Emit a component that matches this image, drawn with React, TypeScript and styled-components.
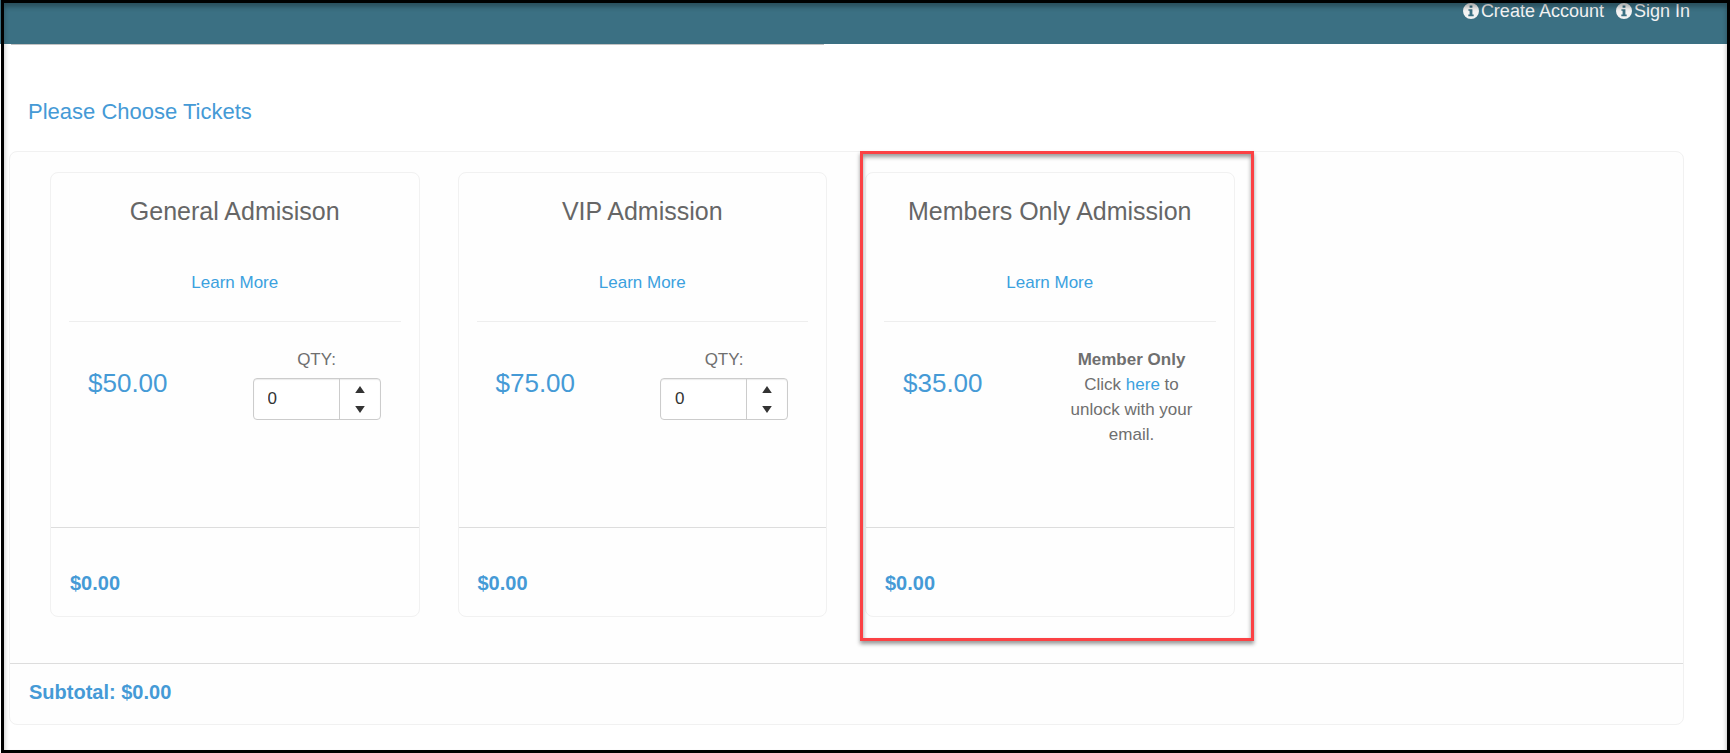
import React, { useId, useState } from "react";
import styled, { createGlobalStyle } from "styled-components";

const GlobalStyle = createGlobalStyle`
  *, *::before, *::after { box-sizing: border-box; }
  body {
    margin: 0;
    background: #fff;
    color: #6f6f6f;
    font-family: "Liberation Sans", Arial, Helvetica, sans-serif;
    font-size: 17px;
    line-height: 25px;
  }
  a { color: #3ba1de; text-decoration: none; }
  h1, h2, p { margin: 0; font-weight: 400; }
`;

const Page = styled.div`
  min-height: 100vh;
`;

const WindowFrame = styled.div`
  position: fixed;
  inset: 0 0 0 1px;
  border: 3px solid #000;
  box-shadow: inset 0 4px 5px rgba(0, 0, 0, 0.3);
  pointer-events: none;
  z-index: 2;
`;

const Header = styled.header`
  height: 44px;
  padding: 0 40px;
  background: #3b7083;
`;

const AccountNav = styled.nav`
  display: flex;
  justify-content: flex-end;
  gap: 12px;
`;

const AccountLink = styled.a`
  display: flex;
  align-items: center;
  gap: 2px;
  color: #f4f4f4;
  font-size: 18px;
  line-height: 22px;
`;

const HeaderRule = styled.div`
  width: 47%;
  height: 1px;
  margin-left: 11px;
  background: #c2c2c2;
`;

const Main = styled.main`
  padding: 54px 46px 0 9px;
`;

const Heading = styled.h1`
  padding: 0 19px;
  color: #459ad6;
  font-size: 22px;
  line-height: 26px;
`;

const Panel = styled.section`
  margin-top: 26px;
  border: 1px solid #f1f1f1;
  border-radius: 8px;
  background: #fefefe;
`;

const TicketGrid = styled.div`
  display: grid;
  grid-template-columns: repeat(4, 1fr);
  gap: 38px;
  padding: 20px 41px 46px 40px;
`;

const Card = styled.article`
  position: relative;
  display: flex;
  flex-direction: column;
  border: 1px solid #f1f1f1;
  border-radius: 8px;
`;

const Highlight = styled.div`
  position: absolute;
  inset: -22px -20px -25px -6px;
  border: 3px solid #fb4144;
  box-shadow: 0 3px 4px rgba(0, 0, 0, 0.4), inset 0 3px 4px rgba(0, 0, 0, 0.4);
  pointer-events: none;
`;

const CardBody = styled.div`
  min-height: 354px;
  padding: 23px 18px;
  text-align: center;
`;

const Title = styled.h2`
  color: #666;
  font-size: 25px;
  line-height: 30px;
`;

const LearnMore = styled.p`
  padding: 44px 0 26px;
  border-bottom: 1px solid #eee;
`;

const PriceRow = styled.div`
  display: flex;
  justify-content: space-between;
  padding: 25px 20px 0 19px;
`;

const Price = styled.p`
  padding-top: 18px;
  color: #459ad6;
  font-size: 26px;
  line-height: 36px;
`;

const Action = styled.div`
  display: flex;
  flex-direction: column;
  width: 128px;
`;

const Spinner = styled.div`
  display: flex;
  height: 42px;
  margin-top: 6px;
  border: 1px solid #ccc;
  border-radius: 4px;
  background: #fff;
  box-shadow: inset 0 1px 1px rgba(0, 0, 0, 0.08);
`;

const Quantity = styled.input`
  flex: 1;
  min-width: 0;
  padding: 0 14px 2px;
  border: 0;
  border-right: 1px solid #ccc;
  border-radius: 4px 0 0 4px;
  background: transparent;
  color: #333;
  font: inherit;
`;

const Steps = styled.div`
  display: flex;
  flex-direction: column;
  width: 40px;
`;

const StepButton = styled.button`
  display: flex;
  flex: 1;
  align-items: center;
  justify-content: center;
  padding: 0;
  border: 0;
  background: transparent;
  color: #333;
`;

const CardFooter = styled.footer`
  padding: 42px 19px 20px;
  border-top: 1px solid #ddd;
`;

const PanelFooter = styled.footer`
  padding: 15px 19px 19px;
  border-top: 1px solid #ddd;
`;

const Total = styled.p`
  color: #459ad6;
  font-size: 20px;
  font-weight: 700;
  line-height: 26px;
`;

type Ticket = { name: string; price: number; membersOnly?: boolean };

const tickets: Ticket[] = [
  { name: "General Admisison", price: 50 },
  { name: "VIP Admission", price: 75 },
  { name: "Members Only Admission", price: 35, membersOnly: true },
];

const money = (n: number) => `$${n.toFixed(2)}`;

function InfoIcon() {
  return (
    <svg width="16" height="16" viewBox="0 0 16 16" fill="currentColor" aria-hidden="true">
      <path
        fillRule="evenodd"
        d="M8 0a8 8 0 1 0 0 16A8 8 0 0 0 8 0zM6.6 2.6h2.8v2.2H6.6zM5.4 6.2h4v5.4h1.3v1.6H5.3v-1.6h1.3V7.8H5.4z"
      />
    </svg>
  );
}

function QuantityPicker({ value, onChange }: { value: number; onChange: (n: number) => void }) {
  const id = useId();
  return (
    <Action>
      <label htmlFor={id}>QTY:</label>
      <Spinner>
        <Quantity
          id={id}
          inputMode="numeric"
          value={value}
          onChange={(e) => onChange(Math.max(0, parseInt(e.target.value, 10) || 0))}
        />
        <Steps>
          <StepButton type="button" aria-label="Increase quantity" onClick={() => onChange(value + 1)}>
            <svg width="10" height="7" viewBox="0 0 10 7" fill="currentColor"><path d="M5 0 9.8 7H.2z" /></svg>
          </StepButton>
          <StepButton type="button" aria-label="Decrease quantity" onClick={() => onChange(Math.max(0, value - 1))}>
            <svg width="10" height="7" viewBox="0 0 10 7" fill="currentColor"><path d="M5 7 .2 0h9.6z" /></svg>
          </StepButton>
        </Steps>
      </Spinner>
    </Action>
  );
}

export default function App() {
  const [counts, setCounts] = useState<number[]>(tickets.map(() => 0));
  const subtotal = tickets.reduce((sum, t, i) => sum + t.price * counts[i], 0);

  return (
    <Page>
      <GlobalStyle />
      <WindowFrame />
      <Header>
        <AccountNav aria-label="Account">
          <AccountLink href="#create"><InfoIcon />Create Account</AccountLink>
          <AccountLink href="#signin"><InfoIcon />Sign In</AccountLink>
        </AccountNav>
      </Header>
      <HeaderRule />
      <Main>
        <Heading>Please Choose Tickets</Heading>
        <Panel>
          <TicketGrid>
            {tickets.map((t, i) => (
              <Card key={t.name}>
                <CardBody>
                  <Title>{t.name}</Title>
                  <LearnMore><a href="#details">Learn More</a></LearnMore>
                  <PriceRow>
                    <Price>{money(t.price)}</Price>
                    {t.membersOnly ? (
                      <Action>
                        <strong>Member Only</strong>
                        <p>Click <a href="#unlock">here</a> to unlock with your email.</p>
                      </Action>
                    ) : (
                      <QuantityPicker
                        value={counts[i]}
                        onChange={(n) => setCounts(counts.map((c, j) => (j === i ? n : c)))}
                      />
                    )}
                  </PriceRow>
                </CardBody>
                <CardFooter><Total>{money(t.price * counts[i])}</Total></CardFooter>
                {t.membersOnly && <Highlight />}
              </Card>
            ))}
          </TicketGrid>
          <PanelFooter><Total>Subtotal: {money(subtotal)}</Total></PanelFooter>
        </Panel>
      </Main>
    </Page>
  );
}
